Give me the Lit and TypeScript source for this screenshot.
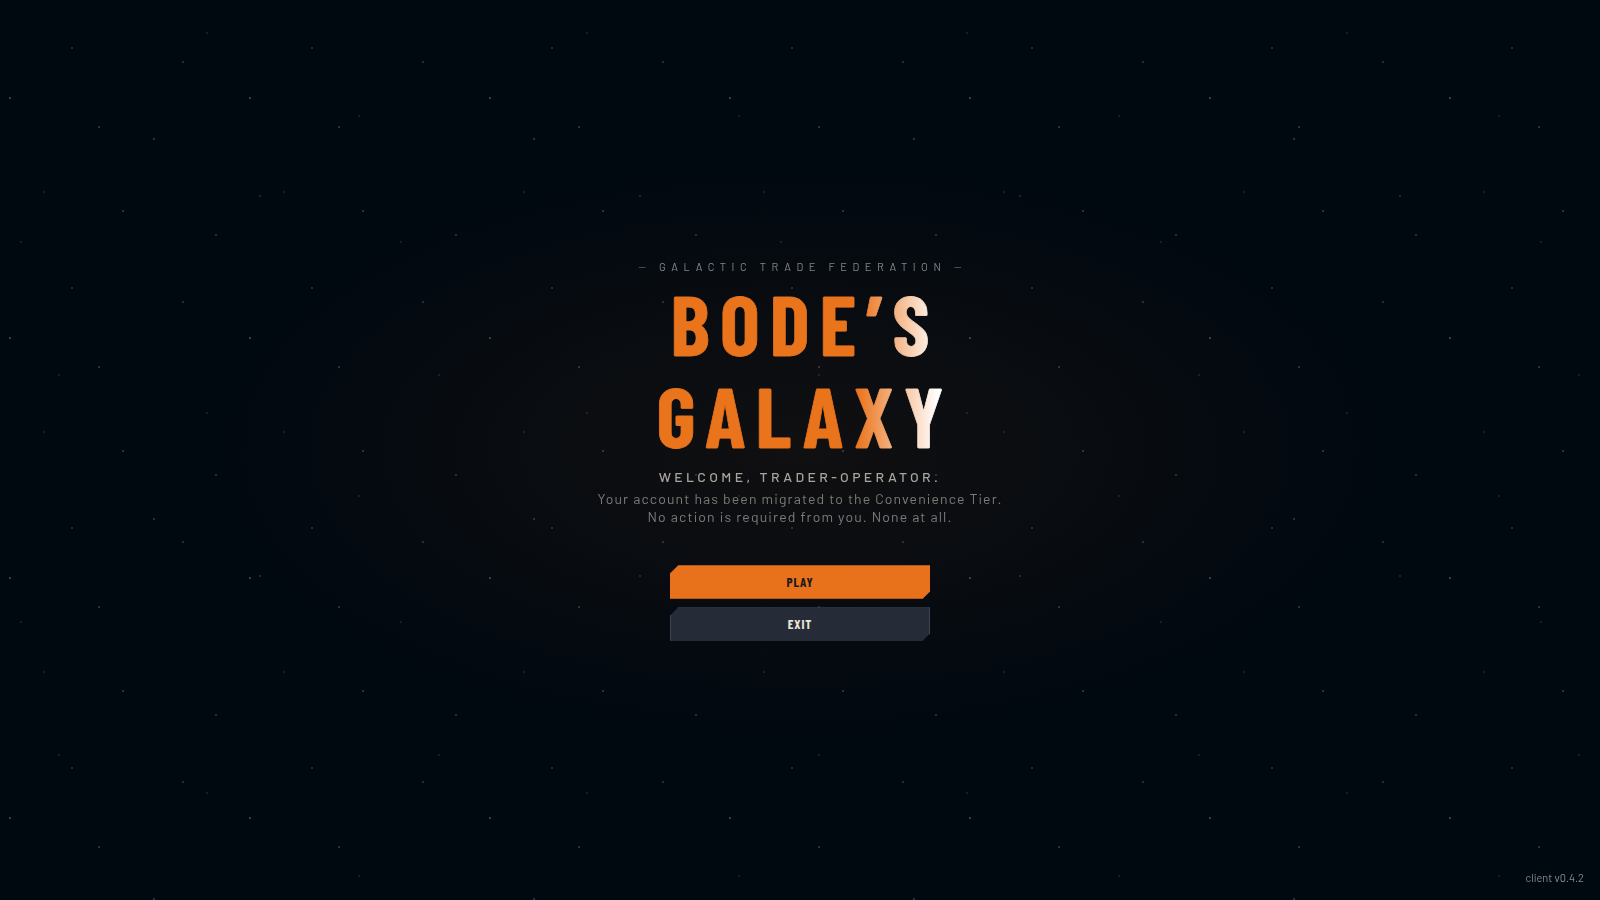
import { LitElement, html, css } from "lit";
import { customElement } from "lit/decorators.js";

@customElement("app-root")
export class AppRoot extends LitElement {
  static styles = css`
    :host { display: block; width: 100vw; height: 100vh; overflow: hidden; position: relative; background: #000810; font-family: "Barlow", "Roboto", sans-serif; color: #8a8a8a; }
    .stars { position: absolute; inset: 0; background-image:
      radial-gradient(1px 1px at 10px 98px, #34414c 100%, transparent),
      radial-gradient(1px 1px at 72px 48px, #222e38 100%, transparent),
      radial-gradient(1px 1px at 99px 127px, #26323c 100%, transparent),
      radial-gradient(1px 1px at 183px 62px, #222e38 100%, transparent),
      radial-gradient(1px 1px at 44px 192px, #16212b 100%, transparent),
      radial-gradient(1px 1px at 123px 211px, #26323c 100%, transparent),
      radial-gradient(1px 1px at 216px 235px, #222e38 100%, transparent);
      background-size: 240px 240px; }
    .stars2 { position: absolute; inset: 0; background-image:
      radial-gradient(1px 1px at 154px 139px, #26323c 100%, transparent),
      radial-gradient(1px 1px at 207px 33px, #141e28 100%, transparent),
      radial-gradient(1px 1px at 21px 242px, #141e28 100%, transparent),
      radial-gradient(1px 1px at 59px 375px, #141e28 100%, transparent),
      radial-gradient(1px 1px at 359px 116px, #141e28 100%, transparent),
      radial-gradient(1px 1px at 260px 196px, #1a2530 100%, transparent);
      background-size: 380px 380px; }
    .glow { position: absolute; inset: 0; background: radial-gradient(ellipse 620px 300px at 50% 50%, rgba(232,114,28,0.07), transparent); }
    .main { position: relative; height: 100%; box-sizing: border-box; padding-top: 1px; display: flex; flex-direction: column; align-items: center; justify-content: center; text-align: center; }
    .over { font-size: 11px; letter-spacing: 0.5em; padding-left: 0.5em; color: #858585; margin-bottom: 4px; opacity: 0.999; }
    h1 { margin: 0 0 7px; padding-left: 0.12em; font: 700 84px/1.1 "Barlow Condensed", "Roboto Condensed", sans-serif; letter-spacing: 0.12em; background: linear-gradient(91deg, #ea741c calc(50% + 58px), #fff calc(50% + 138px)); -webkit-background-clip: text; background-clip: text; color: transparent; -webkit-text-stroke: 0.8px transparent; }
    .welcome { font-size: 14px; font-weight: 500; letter-spacing: 0.24em; color: #a8a49c; margin-bottom: 5px; opacity: 0.999; }
    .sub { font-size: 14px; letter-spacing: 0.08em; line-height: 18px; color: #7d7b77; margin-bottom: 39px; opacity: 0.999; }
    .btns { display: flex; flex-direction: column; gap: 8px; }
    button { width: 260px; height: 34px; box-sizing: border-box; border: 1px solid; font: 700 13px "Barlow Condensed", sans-serif; letter-spacing: 0.07em; clip-path: polygon(8px 0, 100% 0, 100% calc(100% - 8px), calc(100% - 8px) 100%, 0 100%, 0 8px); }
    .play { background: #e8721c; color: #1a1a1a; border-color: #e8721c; border-bottom-color: #b85a14; }
    .exit { background: #252c37; color: #e8e4d8; border-color: #3a4452; border-bottom-color: #252c37; }
    .ver { position: absolute; right: 16px; bottom: 16px; font-size: 11px; color: #888; opacity: 0.999; }
  `;
  render() {
    return html`<div class="stars"></div><div class="stars2"></div><div class="glow"></div>
    <div class="main"><div class="over">— GALACTIC TRADE FEDERATION —</div><h1>BODE’S<br>GALAXY</h1>
    <div class="welcome">WELCOME, TRADER-OPERATOR.</div>
    <div class="sub">Your account has been migrated to the Convenience Tier.<br>No action is required from you. None at all.</div>
    <div class="btns"><button class="play">PLAY</button><button class="exit">EXIT</button></div></div>
    <div class="ver">client v0.4.2</div>`;
  }
}
